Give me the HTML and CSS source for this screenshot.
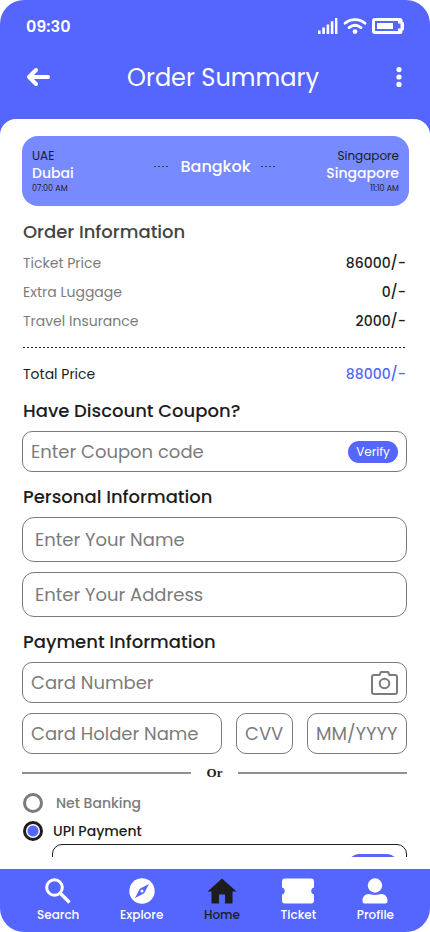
FILE: index.html
```html
<!DOCTYPE html>
<html lang="en">
<head>
<meta charset="utf-8">
<meta name="viewport" content="width=device-width, initial-scale=1">
<title>Order Summary</title>
<link rel="stylesheet" href="styles.css">
</head>
<body>
<div class="screen">
  <header class="header">
    <div class="status">
      <span class="time">09:30</span>
      <div class="status-icons">
        <svg width="20" height="16" viewBox="0 0 20 16" fill="currentColor" aria-hidden="true"><path d="M0 12.500h2.600V16H0zM4.300 9.500h2.600V16H4.300zM8.600 6.500h2.600V16H8.600zM12.800 3.200h2.600V16h-2.600zM17 0h2.400v16H17z"/></svg>
        <svg width="24" height="16" viewBox="0 0 24 16" fill="none" stroke="currentColor" stroke-width="2.800" stroke-linecap="round" aria-hidden="true"><path d="M2 5.300C7.500 .300 16.500 .300 22 5.300M6 9.600c3.800-3 8.200-3 12 0"/><circle cx="12" cy="13.600" r="2.400" fill="currentColor" stroke="none"/></svg>
        <svg width="32" height="16" viewBox="0 0 32 16" aria-hidden="true"><rect x="1.500" y="1.500" width="26" height="13" rx="1.500" fill="none" stroke="currentColor" stroke-width="3"/><path d="M27 0h1a2.500 2.500 0 0 1 2.500 2.500V3.500A2 2 0 0 1 32 5.500v5a2 2 0 0 1-1.500 2v1A2.500 2.500 0 0 1 28 16h-1z" fill="currentColor"/><path d="M26 5.500h2.500v5H26z" fill="#5566ff"/><path d="M5 5h16v6H5z" fill="currentColor"/></svg>
      </div>
    </div>
    <div class="titlebar">
      <button class="icon-button" type="button" aria-label="Back">
        <svg width="24" height="20" viewBox="0 0 24 20" fill="none" stroke="currentColor" stroke-width="4" stroke-linecap="round" stroke-linejoin="round"><path d="M22 10H4M10 3L3 10l7 7"/></svg>
      </button>
      <h1>Order Summary</h1>
      <button class="icon-button" type="button" aria-label="More options">
        <svg width="6" height="20" viewBox="0 0 6 20" fill="currentColor"><circle cx="3" cy="2.600" r="2.600"/><circle cx="3" cy="10" r="2.600"/><circle cx="3" cy="17.400" r="2.600"/></svg>
      </button>
    </div>
  </header>

  <main class="sheet">
    <form class="content">
      <section class="route">
        <div class="stop">
          <span class="country">UAE</span>
          <span class="city">Dubai</span>
          <span class="hour">07:00 AM</span>
        </div>
        <div class="via"><span class="dots"></span><span>Bangkok</span><span class="dots"></span></div>
        <div class="stop stop-end">
          <span class="country">Singapore</span>
          <span class="city">Singapore</span>
          <span class="hour">11:10 AM</span>
        </div>
      </section>

      <h2 class="muted-title">Order Information</h2>
      <dl class="prices">
        <div class="price"><dt>Ticket Price</dt><dd>86000/-</dd></div>
        <div class="price"><dt>Extra Luggage</dt><dd>0/-</dd></div>
        <div class="price"><dt>Travel Insurance</dt><dd>2000/-</dd></div>
        <div class="price total"><dt>Total Price</dt><dd>88000/-</dd></div>
      </dl>

      <h2><label for="coupon">Have Discount Coupon?</label></h2>
      <div class="field">
        <input id="coupon" type="text" placeholder="Enter Coupon code">
        <button class="verify" type="button">Verify</button>
      </div>

      <h2>Personal Information</h2>
      <div class="stack">
        <div class="field tall"><input type="text" aria-label="Name" placeholder="Enter Your Name"></div>
        <div class="field tall"><input type="text" aria-label="Address" placeholder="Enter Your Address"></div>
      </div>

      <h2>Payment Information</h2>
      <div class="stack">
        <div class="field">
          <input type="text" aria-label="Card number" placeholder="Card Number">
          <button class="icon-button camera" type="button" aria-label="Scan card">
            <svg width="27" height="24" viewBox="0 0 27 24" fill="none" stroke="currentColor" stroke-width="2" stroke-linejoin="round"><path d="M3 4h5.500l1.500-3h7l1.500 3H24a2 2 0 0 1 2 2v15a2 2 0 0 1-2 2H3a2 2 0 0 1-2-2V6a2 2 0 0 1 2-2z"/><circle cx="13.500" cy="12.500" r="4.800"/></svg>
          </button>
        </div>
        <div class="card-row">
          <div class="field"><input type="text" aria-label="Card holder name" placeholder="Card Holder Name"></div>
          <div class="field"><input type="text" aria-label="CVV" placeholder="CVV"></div>
          <div class="field"><input type="text" aria-label="Expiry date" placeholder="MM/YYYY"></div>
        </div>
      </div>

      <div class="divider">Or</div>

      <div class="methods">
        <label class="method"><input type="radio" name="method" value="net"><span>Net Banking</span></label>
        <label class="method"><input type="radio" name="method" value="upi" checked><span>UPI Payment</span></label>
      </div>
      <div class="field upi">
        <input type="text" aria-label="UPI ID">
        <button class="verify" type="button" aria-label="Verify UPI ID"></button>
      </div>
    </form>
  </main>

  <nav class="tabs">
    <a href="#search"><svg width="26" height="26" viewBox="0 0 26 26" fill="none" stroke="currentColor" stroke-width="3"><circle cx="9.500" cy="9.500" r="7.800"/><path d="M15 15l9.500 9.500" stroke-width="3.400"/></svg>Search</a>
    <a href="#explore"><svg width="26" height="26" viewBox="0 0 26 26"><circle cx="13" cy="13" r="12.700" fill="currentColor"/><path d="M20 6l-4.800 9.200L6 20l4.800-9.200z" fill="#5566ff"/><circle cx="13" cy="13" r="1.500" fill="currentColor"/></svg>Explore</a>
    <a href="#home" class="current" aria-current="page"><svg width="30" height="26" viewBox="0 0 30 26" fill="currentColor"><path d="M15 .500L29.500 13.500h-4V25.500h-7.500v-9h-6v9H4.500v-12h-4z"/></svg>Home</a>
    <a href="#ticket"><svg width="32" height="26" viewBox="0 0 32 26" fill="currentColor"><path d="M3 .500h26a3 3 0 0 1 3 3v6a3.600 3.600 0 0 0 0 7v6a3 3 0 0 1-3 3H3a3 3 0 0 1-3-3v-6a3.600 3.600 0 0 0 0-7v-6a3 3 0 0 1 3-3z"/></svg>Ticket</a>
    <a href="#profile"><svg width="26" height="26" viewBox="0 0 26 26" fill="currentColor"><circle cx="13" cy="7.500" r="7.200"/><path d="M6.500 16c2 0 3.500 1 6.500 1s4.500-1 6.500-1c3.800 0 6 3 6 6.500v1c0 1.300-.8 2-2 2h-21c-1.200 0-2-.7-2-2v-1c0-3.500 2.200-6.500 6-6.500z"/></svg>Profile</a>
  </nav>
</div>
</body>
</html>
```
FILE: styles.css
```css
:root {
  --blue: #5566ff;
  --ink: #1d1d1d;
  --grey: #7b7b7b;
}

* {
  box-sizing: border-box;
}

body {
  margin: 0;
  background: #fff;
  color: var(--ink);
  font-family: Poppins, Inter, sans-serif;
}

button,
input {
  font: inherit;
}

.screen {
  display: flex;
  flex-direction: column;
  height: 100vh;
  overflow: hidden;
  border-radius: 24px;
  background: var(--blue);
}

.header {
  padding: 16px 26px 12px;
  color: #fff;
}

.status,
.titlebar,
.status-icons {
  display: flex;
  align-items: center;
  justify-content: space-between;
}

.status {
  height: 20px;
  font-size: 16px;
  font-weight: 600;
}

.status-icons {
  gap: 5px;
}

.titlebar {
  height: 60px;
  margin-top: 11px;
  padding-right: 2px;
}

h1 {
  margin: 0;
  font-size: 24px;
  font-weight: 400;
}

.icon-button {
  display: flex;
  padding: 0;
  border: 0;
  background: none;
  color: inherit;
}

.sheet {
  display: flex;
  flex: 1;
  min-height: 0;
  padding-bottom: 12px;
  border-radius: 16px 16px 0 0;
  background: #fff;
}

.content {
  flex: 1;
  overflow-y: auto;
  padding: 17px 23px 0 22px;
  scrollbar-width: none;
}

.route {
  display: flex;
  align-items: center;
  justify-content: space-between;
  height: 70px;
  margin: 0 -2px 12px 0;
  padding: 2px 10px 0;
  border-radius: 16px;
  background: #778aff;
}

.stop {
  display: flex;
  flex: 1;
  flex-direction: column;
}

.stop-end {
  align-items: flex-end;
}

.country {
  font-size: 12px;
  line-height: 18px;
}

.city {
  color: #fff;
  font-size: 14px;
  font-weight: 500;
  line-height: 16px;
}

.hour {
  font-size: 8px;
  line-height: 16px;
}

.via {
  display: flex;
  align-items: center;
  gap: 10px;
  padding-bottom: 12px;
  color: #fff;
  font-size: 16px;
  font-weight: 500;
}

.dots {
  width: 16px;
  height: 1px;
  background: repeating-linear-gradient(90deg, #33396b 0 2px, transparent 2px 4px);
}

h2 {
  margin: 11px 1px 6px;
  font-size: 18px;
  font-weight: 500;
  line-height: 28px;
}

.muted-title {
  margin-bottom: 3px;
  color: #444;
}

.prices {
  margin: 0 1px;
}

.price {
  display: flex;
  align-items: center;
  justify-content: space-between;
  height: 29px;
  font-size: 14px;
}

.price dt {
  color: var(--grey);
}

.price dd {
  margin: 0;
  font-weight: 500;
}

.total {
  height: 39px;
  margin-top: 11px;
  padding-top: 15px;
  background: repeating-linear-gradient(90deg, var(--ink) 0 2px, transparent 2px 4px) top / 100% 1px no-repeat;
}

.price.total dt {
  color: var(--ink);
}

.price.total dd {
  color: var(--blue);
}

.field {
  display: flex;
  align-items: center;
  height: 41px;
  padding: 0 8px;
  border: 1px solid var(--grey);
  border-radius: 10px;
}

.field input {
  flex: 1;
  width: 0;
  min-width: 0;
  padding: 0;
  border: 0;
  outline: 0;
  background: none;
  color: var(--ink);
  font-size: 18px;
}

.field input::placeholder {
  color: var(--grey);
  opacity: 1;
}

.tall {
  height: 45px;
  padding: 0 12px;
  border-radius: 12px;
}

.verify {
  width: 50px;
  height: 22px;
  padding: 0;
  border: 0;
  border-radius: 11px;
  background: var(--blue);
  color: #fff;
  font-size: 12px;
}

.camera {
  color: var(--grey);
}

.stack {
  display: grid;
  gap: 10px;
}

.card-row {
  display: grid;
  grid-template-columns: 1fr 57px 100px;
  gap: 14px;
}

.divider {
  display: flex;
  align-items: center;
  gap: 16px;
  height: 20px;
  margin: 9px 0 7px;
  font-family: "Liberation Serif", serif;
  font-size: 13px;
  font-weight: 700;
}

.divider::before,
.divider::after {
  flex: 1;
  height: 2px;
  background: #909090;
  content: "";
}

.methods {
  display: grid;
  gap: 2px;
}

.method {
  display: flex;
  align-items: center;
  gap: 10px;
  height: 26px;
  font-size: 14px;
  font-weight: 500;
}

.method:first-child {
  gap: 13px;
  color: var(--grey);
}

.method input {
  appearance: none;
  width: 20px;
  height: 20px;
  margin: 0 0 0 1px;
  border: 3px solid currentColor;
  border-radius: 50%;
  color: inherit;
}

.method input:checked {
  background: radial-gradient(circle, var(--blue) 0 5px, #fff 6px);
}

.upi {
  margin-left: 30px;
  border-color: var(--ink);
}

.tabs {
  display: flex;
  justify-content: space-between;
  padding: 9px 36px 8px 37px;
  color: #fff;
}

.tabs a {
  display: flex;
  flex-direction: column;
  align-items: center;
  gap: 2px;
  color: inherit;
  font-size: 12px;
  font-weight: 500;
  line-height: 18px;
  text-decoration: none;
}

.tabs .current {
  color: var(--ink);
}
```
